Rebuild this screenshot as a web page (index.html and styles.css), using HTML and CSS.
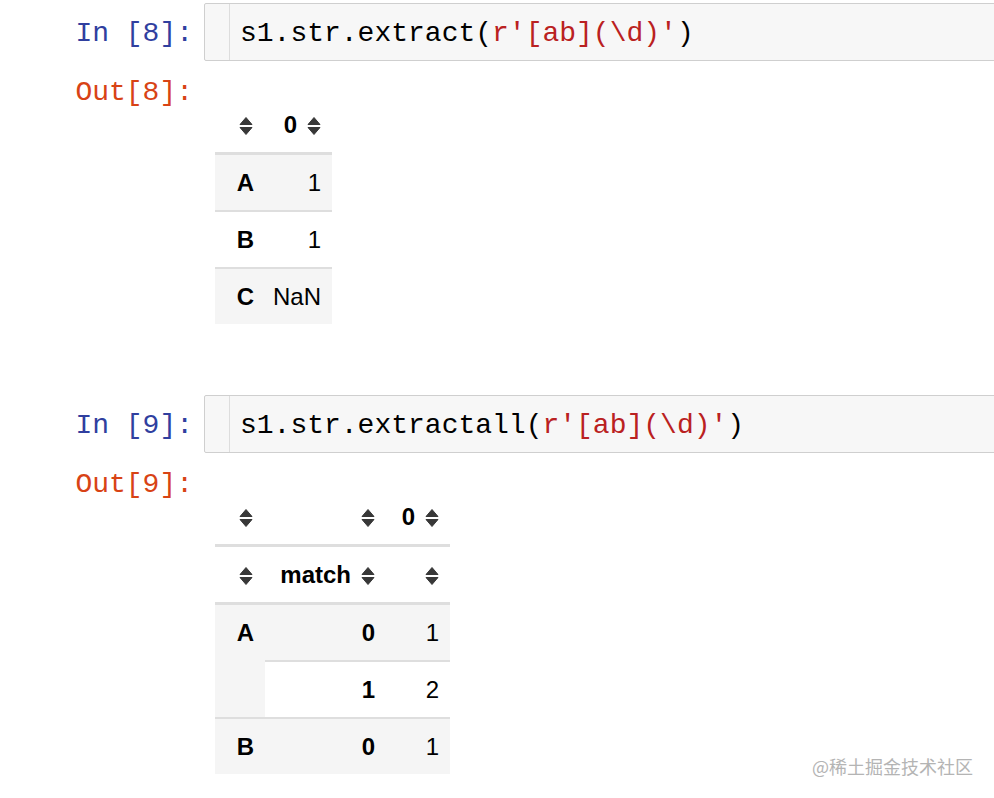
FILE: index.html
```html
<!DOCTYPE html>
<html>
<head>
<meta charset="utf-8">
<link rel="stylesheet" href="styles.css">
</head>
<body>
<div class="nb">
  <div class="cell-in">
    <div class="prompt p-in">In&nbsp;[8]:</div>
    <div class="input">
      <div class="gutter"></div>
      <pre class="code">s1.str.extract(<span class="str">r'[ab](\d)'</span>)</pre>
    </div>
  </div>
  <div class="cell-out">
    <div class="prompt p-out">Out[8]:</div>
    <div class="output">
      <table class="df df1">
        <colgroup><col class="c-idx"><col class="c-val1"></colgroup>
        <thead>
          <tr>
            <th><svg class="si" viewBox="0 0 14 20"><path d="M1 8.5 L7 1.5 L13 8.5 Z M1 11.5 L7 18.5 L13 11.5 Z"/></svg></th>
            <th>0<svg class="si gap" viewBox="0 0 14 20"><path d="M1 8.5 L7 1.5 L13 8.5 Z M1 11.5 L7 18.5 L13 11.5 Z"/></svg></th>
          </tr>
        </thead>
        <tbody>
          <tr class="odd"><th>A</th><td>1</td></tr>
          <tr><th>B</th><td>1</td></tr>
          <tr class="odd"><th>C</th><td>NaN</td></tr>
        </tbody>
      </table>
    </div>
  </div>

  <div class="cell-in second">
    <div class="prompt p-in">In&nbsp;[9]:</div>
    <div class="input">
      <div class="gutter"></div>
      <pre class="code">s1.str.extractall(<span class="str">r'[ab](\d)'</span>)</pre>
    </div>
  </div>
  <div class="cell-out">
    <div class="prompt p-out">Out[9]:</div>
    <div class="output">
      <table class="df df2">
        <colgroup><col class="c-idx"><col class="c-match"><col class="c-val2"></colgroup>
        <thead>
          <tr>
            <th><svg class="si" viewBox="0 0 14 20"><path d="M1 8.5 L7 1.5 L13 8.5 Z M1 11.5 L7 18.5 L13 11.5 Z"/></svg></th>
            <th><svg class="si" viewBox="0 0 14 20"><path d="M1 8.5 L7 1.5 L13 8.5 Z M1 11.5 L7 18.5 L13 11.5 Z"/></svg></th>
            <th>0<svg class="si gap" viewBox="0 0 14 20"><path d="M1 8.5 L7 1.5 L13 8.5 Z M1 11.5 L7 18.5 L13 11.5 Z"/></svg></th>
          </tr>
          <tr>
            <th><svg class="si" viewBox="0 0 14 20"><path d="M1 8.5 L7 1.5 L13 8.5 Z M1 11.5 L7 18.5 L13 11.5 Z"/></svg></th>
            <th>match<svg class="si gap" viewBox="0 0 14 20"><path d="M1 8.5 L7 1.5 L13 8.5 Z M1 11.5 L7 18.5 L13 11.5 Z"/></svg></th>
            <th><svg class="si" viewBox="0 0 14 20"><path d="M1 8.5 L7 1.5 L13 8.5 Z M1 11.5 L7 18.5 L13 11.5 Z"/></svg></th>
          </tr>
        </thead>
        <tbody>
          <tr class="odd"><th rowspan="2" class="top">A</th><th>0</th><td>1</td></tr>
          <tr><th>1</th><td>2</td></tr>
          <tr class="odd"><th>B</th><th>0</th><td>1</td></tr>
        </tbody>
      </table>
    </div>
  </div>
</div>
<div class="watermark">@稀土掘金技术社区</div>
</body>
</html>
```

FILE: styles.css
```css
html, body {
  margin: 0;
  padding: 0;
  background: #ffffff;
  overflow: hidden;
}
body {
  width: 994px;
  height: 798px;
  position: relative;
}
.nb {
  padding-top: 3px;
}
.cell-in {
  display: flex;
  align-items: flex-start;
}
.cell-in.second {
  margin-top: 71px;
}
.prompt {
  width: 193px;
  padding-right: 11px;
  flex: none;
  text-align: right;
  font-family: "Liberation Mono", monospace;
  font-size: 28px;
  white-space: nowrap;
}
.p-in {
  color: #303f9f;
  line-height: 55px;
  padding-top: 3px;
}
.p-out {
  color: #d84315;
  line-height: 32px;
  padding-top: 16px;
}
.input {
  flex: 1;
  display: flex;
  height: 56px;
  margin-right: -20px;
  background: #f7f7f7;
  border: 1px solid #cfcfcf;
  border-radius: 2px;
}
.gutter {
  width: 24px;
  flex: none;
  border-right: 1px solid #dddddd;
}
.code {
  margin: 0;
  padding-left: 10px;
  padding-top: 3px;
  font-family: "Liberation Mono", monospace;
  font-size: 28px;
  line-height: 53px;
  color: #000000;
  height: 53px;
  overflow: hidden;
}
.str {
  color: #ba2121;
}
.cell-out {
  display: flex;
  align-items: flex-start;
}
.output {
  padding-top: 36px;
  padding-left: 11px;
}
.df {
  border-collapse: separate;
  border-spacing: 0;
  table-layout: fixed;
  font-family: "Liberation Sans", Arial, sans-serif;
  font-size: 24px;
  color: #000000;
}
.df1 { width: 117px; }
.df2 { width: 235px; }
.c-idx { width: 50px; }
.c-val1 { width: 67px; }
.c-match { width: 121px; }
.c-val2 { width: 64px; }
.df th, .df td {
  box-sizing: border-box;
  padding: 0 11px 0 0;
  text-align: right;
  vertical-align: middle;
  white-space: nowrap;
  line-height: 55px;
}
.df th {
  font-weight: bold;
}
.df td {
  font-weight: normal;
}
.df thead th {
  border-bottom: 3px solid #dedede;
}
.df tbody tr + tr th,
.df tbody tr + tr td {
  border-top: 2px solid #dedede;
}
.df tbody tr.odd th,
.df tbody tr.odd td {
  background: #f5f5f5;
}
.df th.top {
  vertical-align: top;
}
.si {
  width: 14px;
  height: 20px;
  fill: #383838;
  stroke: #383838;
  stroke-width: 1;
  stroke-linejoin: round;
  vertical-align: -3px;
}
.df thead th:first-child .si {
  margin-right: 1px;
}
.si.gap {
  margin-left: 10px;
}
.watermark {
  position: absolute;
  left: 812px;
  top: 754px;
  font-family: "Noto Sans CJK SC", sans-serif;
  font-size: 18px;
  line-height: 24px;
  color: #b4b4b4;
  white-space: nowrap;
}
```
